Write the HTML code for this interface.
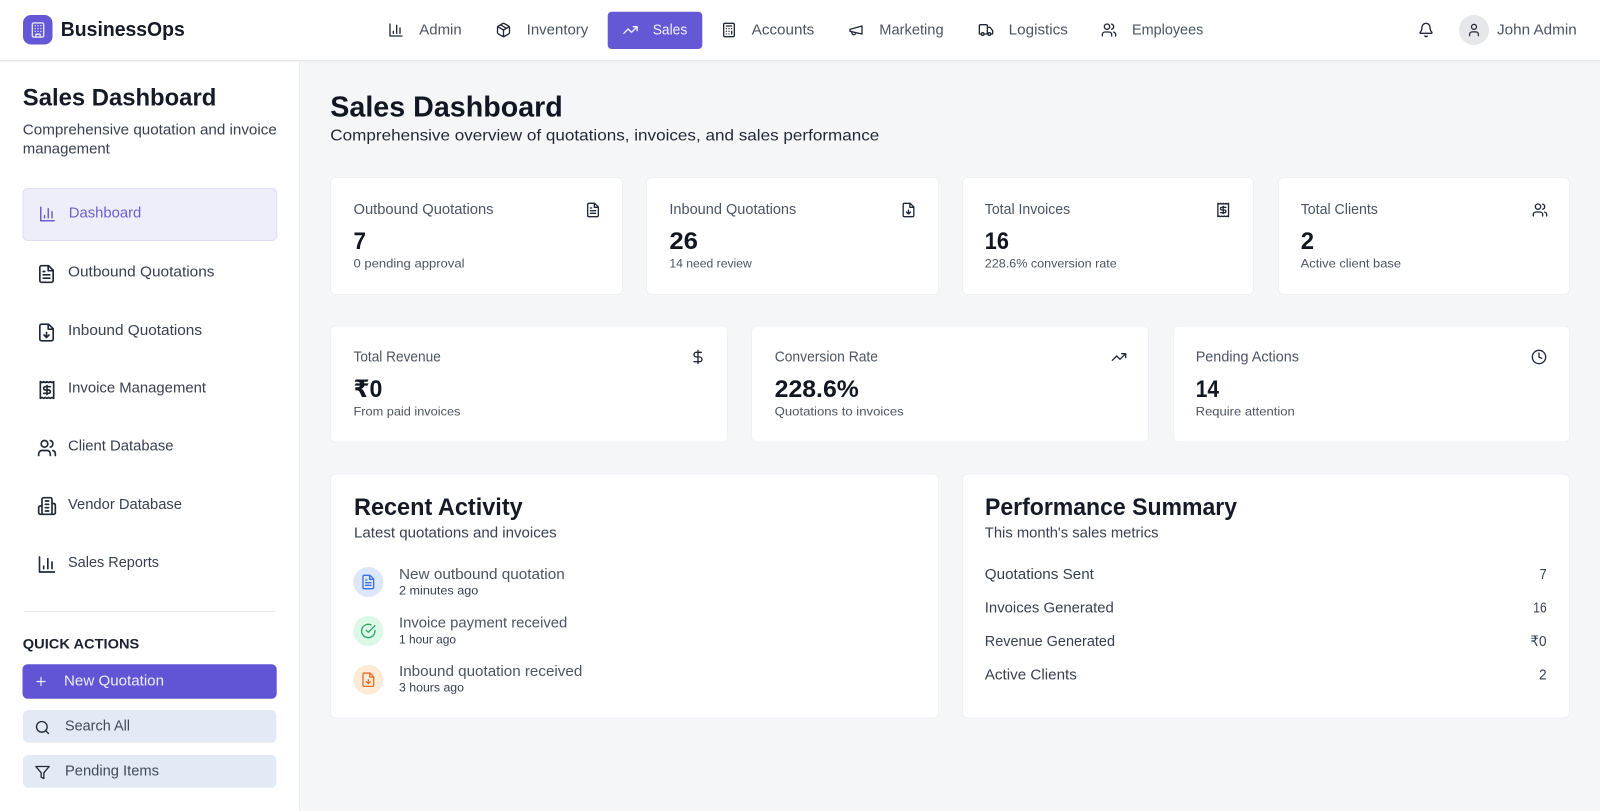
<!DOCTYPE html>
<html lang="en">
<head>
<meta charset="utf-8">
<title>BusinessOps - Sales Dashboard</title>
<style>
html,body{margin:0;padding:0;width:1600px;height:811px;overflow:hidden;background:#f4f6f8}
svg{display:block}
text{font-family:"Liberation Sans","DejaVu Sans",sans-serif;white-space:pre}
.ic{fill:none;stroke-linecap:round;stroke-linejoin:round}
.b{font-weight:700}
</style>
</head>
<body>
<svg xmlns="http://www.w3.org/2000/svg" width="1600" height="811" viewBox="0 0 1600 811">
<defs>
<symbol id="chart" viewBox="0 0 24 24"><path d="M3 3v18h18M18 17V9M13 17V5M8 17v-3"/></symbol>
<symbol id="package" viewBox="0 0 24 24"><path d="M11 21.73a2 2 0 0 0 2 0l7-4A2 2 0 0 0 21 16V8a2 2 0 0 0-1-1.73l-7-4a2 2 0 0 0-2 0l-7 4A2 2 0 0 0 3 8v8a2 2 0 0 0 1 1.73zM12 22V12M3.29 7 12 12l8.71-5M7.5 4.27l9 5.15"/></symbol>
<symbol id="trend" viewBox="0 0 24 24"><path d="M22 7l-8.5 8.5-5-5L2 17M16 7h6v6"/></symbol>
<symbol id="calc" viewBox="0 0 24 24"><rect x="4" y="2" width="16" height="20" rx="2"/><path d="M8 6h8M16 14v4M16 10h.01M12 10h.01M8 10h.01M12 14h.01M8 14h.01M12 18h.01M8 18h.01"/></symbol>
<symbol id="mega" viewBox="0 0 24 24"><path d="m3 11 18-5v12L3 14v-3zM11.6 16.8a3 3 0 1 1-5.8-1.6"/></symbol>
<symbol id="truck" viewBox="0 0 24 24"><path d="M14 18V6a2 2 0 0 0-2-2H4a2 2 0 0 0-2 2v11a1 1 0 0 0 1 1h2M15 18H9M19 18h2a1 1 0 0 0 1-1v-3.65a1 1 0 0 0-.22-.624l-3.48-4.35A1 1 0 0 0 17.52 8H14"/><circle cx="17" cy="18" r="2"/><circle cx="7" cy="18" r="2"/></symbol>
<symbol id="users" viewBox="0 0 24 24"><path d="M16 21v-2a4 4 0 0 0-4-4H6a4 4 0 0 0-4 4v2M16 3.128a4 4 0 0 1 0 7.744M22 21v-2a4 4 0 0 0-3-3.87"/><circle cx="9" cy="7" r="4"/></symbol>
<symbol id="bell" viewBox="0 0 24 24"><path d="M10.268 21a2 2 0 0 0 3.464 0M3.262 15.326A1 1 0 0 0 4 17h16a1 1 0 0 0 .74-1.673C19.41 13.956 18 12.499 18 8A6 6 0 0 0 6 8c0 4.499-1.411 5.956-2.738 7.326"/></symbol>
<symbol id="user" viewBox="0 0 24 24"><path d="M19 21v-2a4 4 0 0 0-4-4H9a4 4 0 0 0-4 4v2"/><circle cx="12" cy="7" r="4"/></symbol>
<symbol id="building" viewBox="0 0 24 24"><rect x="4" y="2" width="16" height="20" rx="2"/><path d="M9 22v-4h6v4M8 6h.01M16 6h.01M12 6h.01M12 10h.01M12 14h.01M16 10h.01M16 14h.01M8 10h.01M8 14h.01"/></symbol>
<symbol id="file" viewBox="0 0 24 24"><path d="M14.5 2H6a2 2 0 0 0-2 2v16a2 2 0 0 0 2 2h12a2 2 0 0 0 2-2V7.5L14.5 2zM14 2v6h6M16 13H8M16 17H8M10 9H8"/></symbol>
<symbol id="filedown" viewBox="0 0 24 24"><path d="M14.5 2H6a2 2 0 0 0-2 2v16a2 2 0 0 0 2 2h12a2 2 0 0 0 2-2V7.5L14.5 2zM14 2v6h6M12 18v-6M9 15l3 3 3-3"/></symbol>
<symbol id="receipt" viewBox="0 0 24 24"><path d="M4 2v20l2-1 2 1 2-1 2 1 2-1 2 1 2-1 2 1V2l-2 1-2-1-2 1-2-1-2 1-2-1-2 1ZM16 8h-6a2 2 0 1 0 0 4h4a2 2 0 1 1 0 4H8M12 17.5v-11"/></symbol>
<symbol id="building2" viewBox="0 0 24 24"><path d="M6 22V4a2 2 0 0 1 2-2h8a2 2 0 0 1 2 2v18ZM6 12H4a2 2 0 0 0-2 2v6a2 2 0 0 0 2 2h2M18 9h2a2 2 0 0 1 2 2v9a2 2 0 0 1-2 2h-2M10 6h4M10 10h4M10 14h4M10 18h4"/></symbol>
<symbol id="plus" viewBox="0 0 24 24"><path d="M5 12h14M12 5v14"/></symbol>
<symbol id="search" viewBox="0 0 24 24"><circle cx="11" cy="11" r="8"/><path d="m21 21-4.3-4.3"/></symbol>
<symbol id="filter" viewBox="0 0 24 24"><path d="M22 3H2l8 9.46V19l4 2v-8.54L22 3z"/></symbol>
<symbol id="dollar" viewBox="0 0 24 24"><path d="M12 2v20M17 5H9.5a3.5 3.5 0 0 0 0 7h5a3.5 3.5 0 0 1 0 7H6"/></symbol>
<symbol id="clock" viewBox="0 0 24 24"><circle cx="12" cy="12" r="10"/><path d="M12 6v6l4 2"/></symbol>
<symbol id="check" viewBox="0 0 24 24"><path d="M22 11.08V12a10 10 0 1 1-5.93-9.14M22 4 12 14.01l-3-3"/></symbol>
</defs>

<rect width="1600" height="811" fill="#f4f6f8"/>

<!-- sidebar -->
<rect x="0" y="60" width="299.5" height="751" fill="#ffffff"/>
<rect x="299" y="60" width="1" height="751" fill="#e9ebee"/>

<!-- header -->
<rect x="0" y="0" width="1600" height="60" fill="#ffffff"/>
<rect x="0" y="60" width="1600" height="1" fill="#e6e8ec"/>
<rect x="0" y="61" width="1600" height="1" fill="#f0f2f4"/>

<rect x="23" y="15" width="29.5" height="29.5" rx="8" fill="#6558d6"/>
<use href="#building" x="29.5" y="21.5" width="17" height="17" class="ic" stroke="#e6e4fa" stroke-width="2"/>
<text x="60.8" y="36" font-size="20" font-weight="700" fill="#141a26" textLength="124" lengthAdjust="spacingAndGlyphs">BusinessOps</text>

<g font-size="14.4" fill="#4b5563">
<text x="419.3" y="34.3" textLength="42.4" lengthAdjust="spacingAndGlyphs">Admin</text>
<text x="526.7" y="34.3" textLength="61.6" lengthAdjust="spacingAndGlyphs">Inventory</text>
<text x="751.7" y="34.3" textLength="62.6" lengthAdjust="spacingAndGlyphs">Accounts</text>
<text x="879.3" y="34.3" textLength="64.3" lengthAdjust="spacingAndGlyphs">Marketing</text>
<text x="1008.7" y="34.3" textLength="59.2" lengthAdjust="spacingAndGlyphs">Logistics</text>
<text x="1132" y="34.3" textLength="71.3" lengthAdjust="spacingAndGlyphs">Employees</text>
<text x="1497" y="34.3" textLength="79.7" lengthAdjust="spacingAndGlyphs">John Admin</text>
</g>
<rect x="607.7" y="11.7" width="94.6" height="37.3" rx="4" fill="#6558d6"/>
<text x="652.7" y="34.3" font-size="14.4" fill="#f1f0fc" textLength="34.6" lengthAdjust="spacingAndGlyphs">Sales</text>

<g class="ic" stroke="#1f2937" stroke-width="2">
<use href="#chart" x="388" y="22" width="16" height="16"/>
<use href="#package" x="495.5" y="22" width="16" height="16"/>
<use href="#calc" x="721" y="22" width="16" height="16"/>
<use href="#mega" x="848" y="22" width="16" height="16"/>
<use href="#truck" x="978" y="22" width="16" height="16"/>
<use href="#users" x="1101" y="22" width="16" height="16"/>
<use href="#bell" x="1418" y="22" width="16" height="16"/>
</g>
<use href="#trend" x="622.5" y="22" width="16" height="16" class="ic" stroke="#f1f0fc" stroke-width="2"/>
<circle cx="1474" cy="30" r="15" fill="#e5e7eb"/>
<use href="#user" x="1466.5" y="22.5" width="15" height="15" class="ic" stroke="#1f2937" stroke-width="2"/>

<!-- sidebar content -->
<text x="22.8" y="105.7" font-size="24" class="b" fill="#141a26" textLength="193.5" lengthAdjust="spacingAndGlyphs">Sales Dashboard</text>
<text x="22.8" y="134.3" font-size="14.4" fill="#374151" textLength="254" lengthAdjust="spacingAndGlyphs">Comprehensive quotation and invoice</text>
<text x="22.8" y="153.7" font-size="14.4" fill="#374151" textLength="87" lengthAdjust="spacingAndGlyphs">management</text>

<rect x="23" y="188.5" width="253.7" height="52" rx="5" fill="#eeedfa" stroke="#e0def5"/>
<use href="#chart" x="38.5" y="205" width="18" height="18" class="ic" stroke="#6a5fd0" stroke-width="2"/>
<text x="68.8" y="217.3" font-size="14.4" fill="#6a5fd0" textLength="72.5" lengthAdjust="spacingAndGlyphs">Dashboard</text>

<g font-size="14.4" fill="#374151">
<text x="68" y="276.7" textLength="146.5" lengthAdjust="spacingAndGlyphs">Outbound Quotations</text>
<text x="68" y="335" textLength="134" lengthAdjust="spacingAndGlyphs">Inbound Quotations</text>
<text x="68" y="392.7" textLength="138" lengthAdjust="spacingAndGlyphs">Invoice Management</text>
<text x="68" y="450.7" textLength="105.5" lengthAdjust="spacingAndGlyphs">Client Database</text>
<text x="68" y="509" textLength="114" lengthAdjust="spacingAndGlyphs">Vendor Database</text>
<text x="68" y="567" textLength="91" lengthAdjust="spacingAndGlyphs">Sales Reports</text>
</g>
<g class="ic" stroke="#1f2937" stroke-width="2">
<use href="#file" x="36.5" y="264" width="20" height="20"/>
<use href="#filedown" x="36.5" y="322.5" width="20" height="20"/>
<use href="#receipt" x="37" y="380" width="20" height="20"/>
<use href="#users" x="37" y="438" width="20" height="20"/>
<use href="#building2" x="37" y="496" width="20" height="20"/>
<use href="#chart" x="37" y="554.5" width="20" height="20"/>
</g>

<rect x="24" y="611" width="252" height="1" fill="#e9ebee"/>
<text x="22.8" y="648.3" font-size="14" class="b" fill="#1b2230" textLength="116.5" lengthAdjust="spacingAndGlyphs">QUICK ACTIONS</text>

<rect x="22.5" y="664.3" width="254.2" height="34.4" rx="5" fill="#6155d5"/>
<use href="#plus" x="34" y="674.5" width="14" height="14" class="ic" stroke="#eeedfb" stroke-width="2"/>
<text x="64" y="685.7" font-size="14.4" fill="#eeedfb" textLength="100" lengthAdjust="spacingAndGlyphs">New Quotation</text>

<rect x="23" y="710" width="253.3" height="32.7" rx="5" fill="#e4eaf5"/>
<use href="#search" x="34.5" y="719.5" width="16" height="16" class="ic" stroke="#1f2937" stroke-width="2"/>
<text x="65" y="730.7" font-size="14.4" fill="#414a5a" textLength="65" lengthAdjust="spacingAndGlyphs">Search All</text>

<rect x="23" y="755" width="253.3" height="32.7" rx="5" fill="#e4eaf5"/>
<use href="#filter" x="34.5" y="764.5" width="16" height="16" class="ic" stroke="#1f2937" stroke-width="2"/>
<text x="65" y="775.7" font-size="14.4" fill="#414a5a" textLength="94" lengthAdjust="spacingAndGlyphs">Pending Items</text>

<!-- main heading -->
<text x="330.3" y="116.7" font-size="29" class="b" fill="#111722" textLength="232.5" lengthAdjust="spacingAndGlyphs">Sales Dashboard</text>
<text x="330.3" y="140.3" font-size="16" fill="#1f2937" textLength="549" lengthAdjust="spacingAndGlyphs">Comprehensive overview of quotations, invoices, and sales performance</text>

<!-- cards -->
<g fill="#ffffff" stroke="#eef0f3">
<rect x="330.5" y="177.5" width="292" height="117" rx="5"/>
<rect x="646.5" y="177.5" width="292" height="117" rx="5"/>
<rect x="962.5" y="177.5" width="291" height="117" rx="5"/>
<rect x="1278.5" y="177.5" width="291" height="117" rx="5"/>
<rect x="330.5" y="326" width="397" height="116" rx="5"/>
<rect x="751.5" y="326" width="397" height="116" rx="5"/>
<rect x="1173.5" y="326" width="396" height="116" rx="5"/>
<rect x="330.5" y="474" width="608" height="244" rx="5"/>
<rect x="962.5" y="474" width="607" height="244" rx="5"/>
</g>

<g font-size="14.4" fill="#4b5563">
<text x="353.5" y="214" textLength="140" lengthAdjust="spacingAndGlyphs">Outbound Quotations</text>
<text x="669.4" y="214" textLength="126.9" lengthAdjust="spacingAndGlyphs">Inbound Quotations</text>
<text x="984.8" y="214" textLength="85.4" lengthAdjust="spacingAndGlyphs">Total Invoices</text>
<text x="1300.7" y="214" textLength="77.2" lengthAdjust="spacingAndGlyphs">Total Clients</text>
<text x="353.5" y="361.3" textLength="87.3" lengthAdjust="spacingAndGlyphs">Total Revenue</text>
<text x="774.7" y="361.3" textLength="103.3" lengthAdjust="spacingAndGlyphs">Conversion Rate</text>
<text x="1195.7" y="361.3" textLength="103.3" lengthAdjust="spacingAndGlyphs">Pending Actions</text>
</g>
<g font-size="24" class="b" fill="#111722">
<text x="353.5" y="249" textLength="12.5" lengthAdjust="spacingAndGlyphs">7</text>
<text x="669.4" y="249" textLength="28.6" lengthAdjust="spacingAndGlyphs">26</text>
<text x="984.8" y="249" textLength="24.1" lengthAdjust="spacingAndGlyphs">16</text>
<text x="1300.7" y="249" textLength="13.3" lengthAdjust="spacingAndGlyphs">2</text>
<text x="353.5" y="397" textLength="28.9" lengthAdjust="spacingAndGlyphs">₹0</text>
<text x="774.7" y="397" textLength="84.1" lengthAdjust="spacingAndGlyphs">228.6%</text>
<text x="1195.7" y="397" textLength="23.3" lengthAdjust="spacingAndGlyphs">14</text>
</g>
<g font-size="12.2" fill="#4b5563">
<text x="353.5" y="267.3" textLength="111" lengthAdjust="spacingAndGlyphs">0 pending approval</text>
<text x="669.4" y="267.3" textLength="82.4" lengthAdjust="spacingAndGlyphs">14 need review</text>
<text x="984.8" y="267.3" textLength="131.9" lengthAdjust="spacingAndGlyphs">228.6% conversion rate</text>
<text x="1300.7" y="267.3" textLength="100.3" lengthAdjust="spacingAndGlyphs">Active client base</text>
<text x="353.5" y="415.7" textLength="106.9" lengthAdjust="spacingAndGlyphs">From paid invoices</text>
<text x="774.7" y="415.7" textLength="129" lengthAdjust="spacingAndGlyphs">Quotations to invoices</text>
<text x="1195.7" y="415.7" textLength="99" lengthAdjust="spacingAndGlyphs">Require attention</text>
</g>
<g class="ic" stroke="#1f2937" stroke-width="2">
<use href="#file" x="585" y="202" width="16" height="16"/>
<use href="#filedown" x="900.5" y="202" width="16" height="16"/>
<use href="#receipt" x="1215.2" y="202" width="16" height="16"/>
<use href="#users" x="1532" y="202" width="16" height="16"/>
<use href="#dollar" x="690" y="349" width="16" height="16"/>
<use href="#trend" x="1111" y="349" width="16" height="16"/>
<use href="#clock" x="1531" y="349" width="16" height="16"/>
</g>

<!-- Recent activity -->
<text x="354" y="515" font-size="24" class="b" fill="#141a26" textLength="168.7" lengthAdjust="spacingAndGlyphs">Recent Activity</text>
<text x="354" y="537.3" font-size="14.4" fill="#374151" textLength="202.7" lengthAdjust="spacingAndGlyphs">Latest quotations and invoices</text>

<circle cx="368.3" cy="582" r="15" fill="#dbe7fc"/>
<circle cx="368.3" cy="631" r="15" fill="#dcf8e6"/>
<circle cx="368.3" cy="679.7" r="15" fill="#fdebd8"/>
<use href="#file" x="360.3" y="574" width="16" height="16" class="ic" stroke="#3f6fe0" stroke-width="2"/>
<use href="#check" x="360.3" y="623" width="16" height="16" class="ic" stroke="#2fa862" stroke-width="2"/>
<use href="#filedown" x="360.3" y="671.7" width="16" height="16" class="ic" stroke="#e8702a" stroke-width="2"/>

<g font-size="14.4" fill="#4b5563">
<text x="399" y="579" textLength="165.7" lengthAdjust="spacingAndGlyphs">New outbound quotation</text>
<text x="399" y="627.3" textLength="168.3" lengthAdjust="spacingAndGlyphs">Invoice payment received</text>
<text x="399" y="676" textLength="183.3" lengthAdjust="spacingAndGlyphs">Inbound quotation received</text>
</g>
<g font-size="12.2" fill="#374151">
<text x="399" y="594.3" textLength="79.3" lengthAdjust="spacingAndGlyphs">2 minutes ago</text>
<text x="399" y="643.7" textLength="57" lengthAdjust="spacingAndGlyphs">1 hour ago</text>
<text x="399" y="691.7" textLength="65" lengthAdjust="spacingAndGlyphs">3 hours ago</text>
</g>

<!-- Performance summary -->
<text x="985" y="515" font-size="24" class="b" fill="#141a26" textLength="252" lengthAdjust="spacingAndGlyphs">Performance Summary</text>
<text x="984.8" y="537.3" font-size="14.4" fill="#374151" textLength="173.7" lengthAdjust="spacingAndGlyphs">This month's sales metrics</text>
<g font-size="14.4" fill="#374151">
<text x="984.8" y="579" textLength="109.1" lengthAdjust="spacingAndGlyphs">Quotations Sent</text>
<text x="984.8" y="612.3" textLength="129" lengthAdjust="spacingAndGlyphs">Invoices Generated</text>
<text x="984.8" y="646" textLength="130.2" lengthAdjust="spacingAndGlyphs">Revenue Generated</text>
<text x="984.8" y="679.7" textLength="92.1" lengthAdjust="spacingAndGlyphs">Active Clients</text>
<text x="1539.6" y="579" textLength="7" lengthAdjust="spacingAndGlyphs">7</text>
<text x="1533.3" y="612.3" textLength="13.3" lengthAdjust="spacingAndGlyphs">16</text>
<text x="1530.4" y="646" textLength="16.2" lengthAdjust="spacingAndGlyphs">₹0</text>
<text x="1539" y="679.7" textLength="7.6" lengthAdjust="spacingAndGlyphs">2</text>
</g>
</svg>
</body>
</html>
